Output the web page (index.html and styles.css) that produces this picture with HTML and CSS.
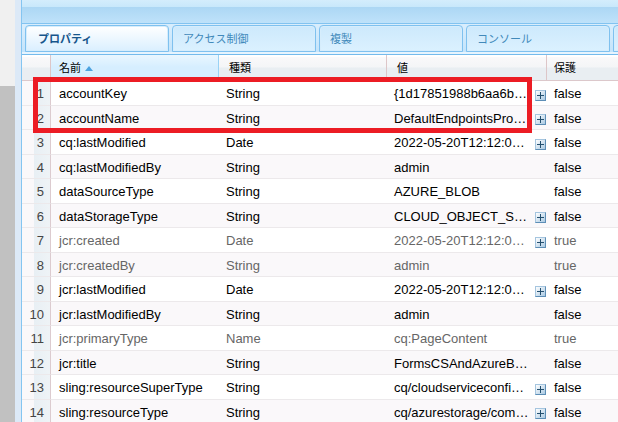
FILE: index.html
```html
<!DOCTYPE html>
<html lang="ja">
<head>
<meta charset="utf-8">
<title>プロパティ</title>
<link rel="stylesheet" href="styles.css">
</head>
<body>
<div class="layout">
  <div class="scrollbar"><div class="thumb"></div></div>
  <div class="splitter"></div>
  <main class="panel">
    <div class="toolbar"></div>
    <div class="tabs" role="tablist">
      <button class="tab active" role="tab" aria-selected="true">プロパティ</button>
      <button class="tab" role="tab">アクセス制御</button>
      <button class="tab" role="tab">複製</button>
      <button class="tab" role="tab">コンソール</button>
      <button class="tab" role="tab" aria-label="tab"></button>
    </div>
    <div class="grid">
      <table>
        <colgroup><col class="c-num"><col class="c-text"><col class="c-text"><col class="c-value"><col></colgroup>
        <thead>
          <tr><th></th><th class="sorted">名前<svg class="sort" width="8" height="5" viewBox="0 0 8 5"><path d="M4 0L8 5H0Z" fill="#4ca3e0"/></svg></th><th>種類</th><th>値</th><th class="last">保護</th></tr>
        </thead>
        <tbody>
          <tr><td>1</td><td>accountKey</td><td>String</td><td><div class="value">{1d17851988b6aa6b…<button class="expand" aria-label="+"></button></div></td><td>false</td></tr>
          <tr><td>2</td><td>accountName</td><td>String</td><td><div class="value">DefaultEndpointsPro…<button class="expand" aria-label="+"></button></div></td><td>false</td></tr>
          <tr><td>3</td><td>cq:lastModified</td><td>Date</td><td><div class="value">2022-05-20T12:12:0…<button class="expand" aria-label="+"></button></div></td><td>false</td></tr>
          <tr><td>4</td><td>cq:lastModifiedBy</td><td>String</td><td>admin</td><td>false</td></tr>
          <tr><td>5</td><td>dataSourceType</td><td>String</td><td>AZURE_BLOB</td><td>false</td></tr>
          <tr><td>6</td><td>dataStorageType</td><td>String</td><td><div class="value">CLOUD_OBJECT_S…<button class="expand" aria-label="+"></button></div></td><td>false</td></tr>
          <tr class="locked"><td>7</td><td>jcr:created</td><td>Date</td><td><div class="value">2022-05-20T12:12:0…<button class="expand" aria-label="+"></button></div></td><td>true</td></tr>
          <tr class="locked"><td>8</td><td>jcr:createdBy</td><td>String</td><td>admin</td><td>true</td></tr>
          <tr><td>9</td><td>jcr:lastModified</td><td>Date</td><td><div class="value">2022-05-20T12:12:0…<button class="expand" aria-label="+"></button></div></td><td>false</td></tr>
          <tr><td>10</td><td>jcr:lastModifiedBy</td><td>String</td><td>admin</td><td>false</td></tr>
          <tr class="locked"><td>11</td><td>jcr:primaryType</td><td>Name</td><td>cq:PageContent</td><td>true</td></tr>
          <tr><td>12</td><td>jcr:title</td><td>String</td><td>FormsCSAndAzureB…</td><td>false</td></tr>
          <tr><td>13</td><td>sling:resourceSuperType</td><td>String</td><td><div class="value">cq/cloudserviceconfi…<button class="expand" aria-label="+"></button></div></td><td>false</td></tr>
          <tr><td>14</td><td>sling:resourceType</td><td>String</td><td><div class="value">cq/azurestorage/com…<button class="expand" aria-label="+"></button></div></td><td>false</td></tr>
        </tbody>
      </table>
      <div class="highlight"></div>
    </div>
  </main>
</div>
</body>
</html>
```
FILE: styles.css
```css
* { box-sizing: border-box; }
body {
  margin: 0;
  background: #fff;
  font-family: "Liberation Sans", "Noto Sans CJK JP", sans-serif;
  font-size: 13px;
  color: #000;
}
.layout { display: flex; height: 100vh; overflow: hidden; }
.scrollbar { width: 15px; flex: none; background: #f0f0f0; padding-top: 86px; }
.thumb { height: 100%; background: #c1c1c1; }
.splitter { width: 7px; flex: none; background: #dce9f7; border-right: 1px solid #84c5f1; }
.panel { flex: 1; min-width: 0; }
.toolbar {
  height: 24px;
  background: linear-gradient(#d4edfc 0, #c8e8fb 7px, #acd7f4 7px, #bfe2fa 23px);
  border-bottom: 1px solid #82c3f0;
}
.tabs {
  display: flex;
  gap: 3px;
  height: 31px;
  padding: 1px 0 2px 3px;
  background: linear-gradient(#d9eefd, #c4e4fb 28px, #e6f4fe 28px);
  border-bottom: 1px solid #75bbec;
  overflow: hidden;
}
.tab {
  flex: none;
  width: 144px;
  padding: 0 0 1px 10px;
  border: 1px solid #7fc1ef;
  box-shadow: inset 0 0 0 1px #d6edfc;
  border-radius: 4px 4px 0 0;
  background: linear-gradient(#cde9fc, #dbf1ff);
  color: #4189ba;
  font: 11px "Noto Sans CJK JP", sans-serif;
  text-align: left;
}
.tab.active {
  padding-left: 12px;
  background: linear-gradient(#fff, #daefff);
  color: #17568c;
  font-weight: bold;
}
.grid { position: relative; }
table { width: 100%; table-layout: fixed; border-collapse: separate; border-spacing: 0; }
.c-num { width: 29px; }
.c-text { width: 168px; }
.c-value { width: 160px; }
th {
  height: 26px;
  padding: 0 0 2px 10px;
  border-right: 1px solid #ddc6c8;
  border-bottom: 1px solid #dcc8cb;
  background: linear-gradient(#fff 2px, #faf9fa 2px, #f4f5f7 12px, #e9eef2 13px);
  font: 11px/16px "Noto Sans CJK JP", sans-serif;
  text-align: left;
}
th.sorted { padding-left: 8px; border-right-color: #99d2f5; background: linear-gradient(#eaf7ff, #d6eeff 12px); }
th.last { padding-left: 7px; border-right: 0; }
.sort { margin-left: 4px; vertical-align: 1px; }
td {
  height: 24px;
  padding: 2px 0 0 7px;
  border-bottom: 1px solid #ece9eb;
  line-height: 16px;
  white-space: nowrap;
}
td:nth-child(2) { padding-left: 8px; }
tr:nth-child(odd) td { height: 25px; }
tr:nth-child(even) td { background: #faf8fa; }
tbody tr td:first-child {
  padding: 2px 6px 0 0;
  border-right: 1px solid #dccbcf;
  background: linear-gradient(90deg, #faf8fa 12px, #e8eff4 12px, #eef3f6 27px);
  color: #444;
  text-align: right;
}
.locked { color: #666; }
.value { display: flex; align-items: center; justify-content: space-between; padding-right: 1px; }
.expand {
  width: 11px;
  height: 11px;
  margin-top: 2px;
  padding: 0;
  border: 1px solid #5d8eb6;
  border-top-color: #a5c5df;
  border-left-color: #a5c5df;
  background:
    linear-gradient(#24506f, #24506f) center / 7px 1px no-repeat,
    linear-gradient(#24506f, #24506f) center / 1px 7px no-repeat,
    linear-gradient(135deg, #fff, #a9c9e2);
}
.highlight {
  position: absolute;
  top: 22px;
  left: 11px;
  width: 499px;
  height: 56px;
  border: 5px solid #ec1c24;
  pointer-events: none;
}
```
